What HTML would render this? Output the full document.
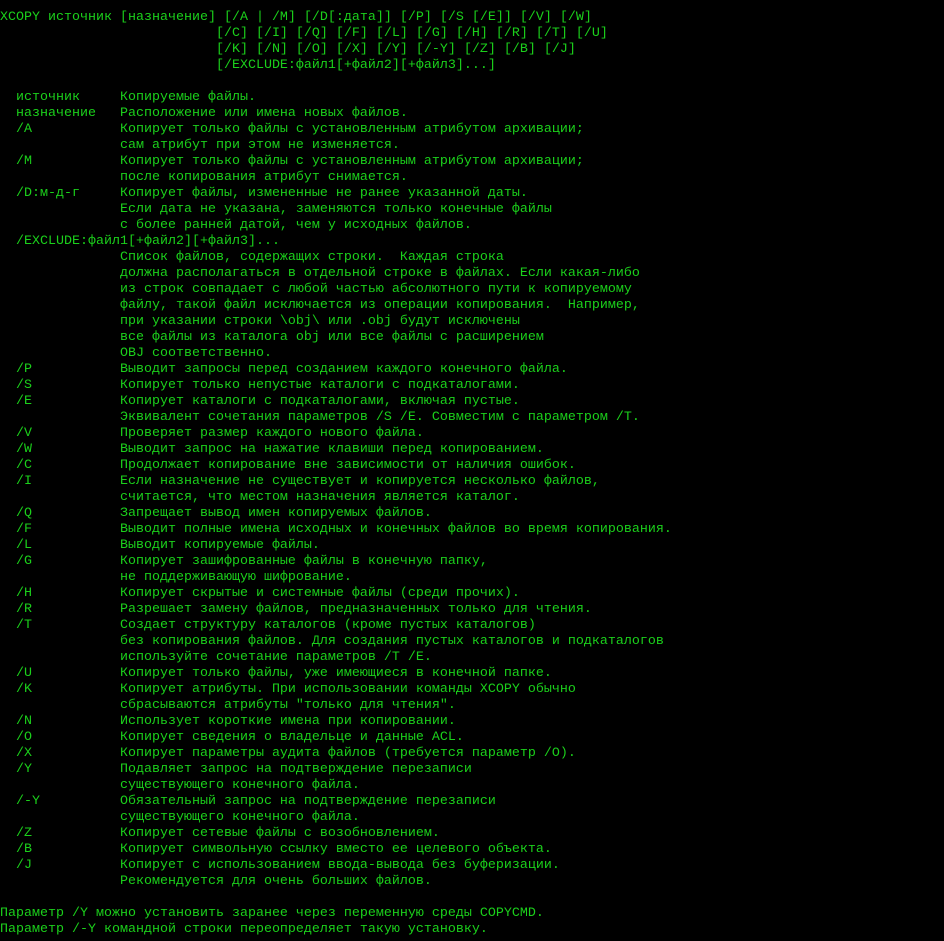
<!DOCTYPE html>
<html><head><meta charset="utf-8"><style>
html,body{margin:0;padding:0;background:#000;width:944px;height:941px;overflow:hidden}
pre{margin:0;position:absolute;left:0;top:10px;font-family:"Liberation Mono","DejaVu Sans Mono",monospace;font-size:13.33px;line-height:16px;color:#1bd01b;white-space:pre}
</style></head><body><pre>XCOPY источник [назначение] [/A | /M] [/D[:дата]] [/P] [/S [/E]] [/V] [/W]
                           [/C] [/I] [/Q] [/F] [/L] [/G] [/H] [/R] [/T] [/U]
                           [/K] [/N] [/O] [/X] [/Y] [/-Y] [/Z] [/B] [/J]
                           [/EXCLUDE:файл1[+файл2][+файл3]...]

  источник     Копируемые файлы.
  назначение   Расположение или имена новых файлов.
  /A           Копирует только файлы с установленным атрибутом архивации;
               сам атрибут при этом не изменяется.
  /M           Копирует только файлы с установленным атрибутом архивации;
               после копирования атрибут снимается.
  /D:м-д-г     Копирует файлы, измененные не ранее указанной даты.
               Если дата не указана, заменяются только конечные файлы
               с более ранней датой, чем у исходных файлов.
  /EXCLUDE:файл1[+файл2][+файл3]...
               Список файлов, содержащих строки.  Каждая строка
               должна располагаться в отдельной строке в файлах. Если какая-либо
               из строк совпадает с любой частью абсолютного пути к копируемому
               файлу, такой файл исключается из операции копирования.  Например,
               при указании строки \obj\ или .obj будут исключены
               все файлы из каталога obj или все файлы с расширением
               OBJ соответственно.
  /P           Выводит запросы перед созданием каждого конечного файла.
  /S           Копирует только непустые каталоги с подкаталогами.
  /E           Копирует каталоги с подкаталогами, включая пустые.
               Эквивалент сочетания параметров /S /E. Совместим с параметром /T.
  /V           Проверяет размер каждого нового файла.
  /W           Выводит запрос на нажатие клавиши перед копированием.
  /C           Продолжает копирование вне зависимости от наличия ошибок.
  /I           Если назначение не существует и копируется несколько файлов,
               считается, что местом назначения является каталог.
  /Q           Запрещает вывод имен копируемых файлов.
  /F           Выводит полные имена исходных и конечных файлов во время копирования.
  /L           Выводит копируемые файлы.
  /G           Копирует зашифрованные файлы в конечную папку,
               не поддерживающую шифрование.
  /H           Копирует скрытые и системные файлы (среди прочих).
  /R           Разрешает замену файлов, предназначенных только для чтения.
  /T           Создает структуру каталогов (кроме пустых каталогов)
               без копирования файлов. Для создания пустых каталогов и подкаталогов
               используйте сочетание параметров /T /E.
  /U           Копирует только файлы, уже имеющиеся в конечной папке.
  /K           Копирует атрибуты. При использовании команды XCOPY обычно
               сбрасываются атрибуты "только для чтения".
  /N           Использует короткие имена при копировании.
  /O           Копирует сведения о владельце и данные ACL.
  /X           Копирует параметры аудита файлов (требуется параметр /O).
  /Y           Подавляет запрос на подтверждение перезаписи
               существующего конечного файла.
  /-Y          Обязательный запрос на подтверждение перезаписи
               существующего конечного файла.
  /Z           Копирует сетевые файлы с возобновлением.
  /B           Копирует символьную ссылку вместо ее целевого объекта.
  /J           Копирует с использованием ввода-вывода без буферизации.
               Рекомендуется для очень больших файлов.

Параметр /Y можно установить заранее через переменную среды COPYCMD.
Параметр /-Y командной строки переопределяет такую установку.</pre></body></html>
